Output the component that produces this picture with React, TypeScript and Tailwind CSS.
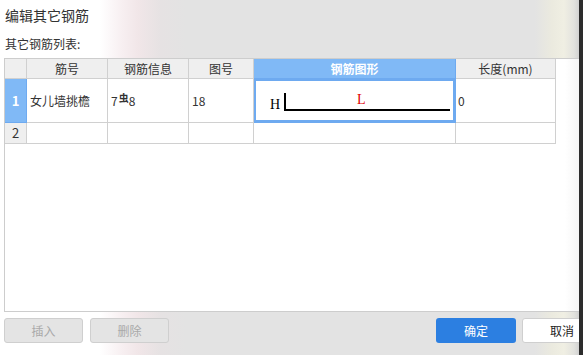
import React from "react";

const font = { fontFamily: '"Noto Sans CJK SC", "Noto Sans", sans-serif' };

export default function App() {
  return (
    <div
      className="flex w-[583px] h-[355px] overflow-hidden bg-[#2c2c2c] text-[#333]"
      style={font}
    >
      <div className="w-[579px] shrink-0 h-full overflow-hidden flex flex-col bg-[linear-gradient(to_right,#ffffff_0px,#ffffff_100px,#f7eff1_122px,#f1e6e8_138px,#e6e2e3_160px,#e3e3e3_185px,#e3e3e3_535px,#ebeadf_552px,#f0efe3_564px,#e2e2de_574px,#d2d2d2_579px)]">
        <div className="pt-[5px] pl-[5px] text-[14px] leading-[20px] text-[#333]">编辑其它钢筋</div>
        <div className="mt-[11px] pl-[5px] text-[12px] leading-[16px] text-[#333]">其它钢筋列表:</div>
        <div className="mt-[6px] ml-[4px] w-[575px] h-[254px] shrink-0 bg-[linear-gradient(to_right,#ffffff_0px,#ffffff_560px,#f4f4f4_575px)] border-l border-t border-b border-[#cdcdcd] text-[12px]">
          {/* header */}
          <div className="flex h-[20px]">
            <div className="w-[22px] shrink-0 h-full bg-[#efefef] border-r border-b border-[#d0d0d0]" />
            <div className="w-[81px] shrink-0 h-full bg-[#efefef] border-r border-b border-[#d0d0d0] flex items-center justify-center">筋号</div>
            <div className="w-[81px] shrink-0 h-full bg-[#efefef] border-r border-b border-[#d0d0d0] flex items-center justify-center">钢筋信息</div>
            <div className="w-[65px] shrink-0 h-full bg-[#efefef] border-r border-b border-[#d0d0d0] flex items-center justify-center">图号</div>
            <div className="w-[202px] shrink-0 h-full bg-[#80b9f6] border-r border-b border-[#6eaaf0] flex items-center justify-center text-white font-bold">钢筋图形</div>
            <div className="w-[100px] shrink-0 h-full bg-[#efefef] border-r border-b border-[#d0d0d0] flex items-center justify-center">长度(mm)</div>
          </div>
          {/* row 1 */}
          <div className="flex h-[44px]">
            <div className="w-[22px] shrink-0 h-full bg-[#80b9f6] border-r border-b border-[#6eaaf0] flex items-center justify-center text-white text-[13px] font-bold">1</div>
            <div className="w-[81px] shrink-0 h-full border-r border-b border-[#d0d0d0] flex items-center pl-[3px]">女儿墙挑檐</div>
            <div className="w-[81px] shrink-0 h-full border-r border-b border-[#d0d0d0] flex items-center pl-[3px]">
              <span>7</span>
              <span className="text-[10px] leading-none font-bold ml-[1px] -mt-[6px]">虫</span>
              <span>8</span>
            </div>
            <div className="w-[65px] shrink-0 h-full border-r border-b border-[#d0d0d0] flex items-center pl-[3px]">18</div>
            <div className="w-[202px] shrink-0 h-full border-r border-b border-[#6eaaf0] shadow-[inset_0_0_0_2px_#6eaaf0]">
              <svg width="201" height="43" viewBox="0 0 201 43">
                <text x="16" y="30" fontFamily='"Liberation Serif", serif' fontSize="14" fill="#000">H</text>
                <text x="103" y="25" fontFamily='"Liberation Serif", serif' fontSize="14" fill="#e00000">L</text>
                <rect x="30" y="14" width="2" height="18" fill="#000" />
                <rect x="30" y="30" width="166" height="2" fill="#000" />
              </svg>
            </div>
            <div className="w-[100px] shrink-0 h-full border-r border-b border-[#d0d0d0] flex items-center pl-[2px]">0</div>
          </div>
          {/* row 2 */}
          <div className="flex h-[21px]">
            <div className="w-[22px] shrink-0 h-full bg-[#efefef] border-r border-b border-[#d0d0d0] flex items-center justify-center text-[13px]">2</div>
            <div className="w-[81px] shrink-0 h-full border-r border-b border-[#d0d0d0]" />
            <div className="w-[81px] shrink-0 h-full border-r border-b border-[#d0d0d0]" />
            <div className="w-[65px] shrink-0 h-full border-r border-b border-[#d0d0d0]" />
            <div className="w-[202px] shrink-0 h-full border-r border-b border-[#d0d0d0]" />
            <div className="w-[100px] shrink-0 h-full border-r border-b border-[#d0d0d0]" />
          </div>
        </div>
        <div className="mt-[6px] ml-[4px] flex h-[25px] text-[12px]">
          <div className="w-[79px] shrink-0 h-full rounded-[3px] border border-[#cfcfcf] bg-[#e4e4e4] text-[#a9a9a9] flex items-center justify-center">插入</div>
          <div className="ml-[7px] w-[79px] shrink-0 h-full rounded-[3px] border border-[#cfcfcf] bg-[#e4e4e4] text-[#a9a9a9] flex items-center justify-center">删除</div>
          <div className="ml-[267px] w-[80px] shrink-0 h-full rounded-[3px] bg-[#2c7fe1] text-white flex items-center justify-center">确定</div>
          <div className="ml-[6px] w-[80px] shrink-0 h-full rounded-[3px] border border-[#cfcfcf] bg-white text-[#222] flex items-center justify-center">取消</div>
        </div>
      </div>
      <div className="flex-1 bg-[#2c2c2c]" />
    </div>
  );
}
